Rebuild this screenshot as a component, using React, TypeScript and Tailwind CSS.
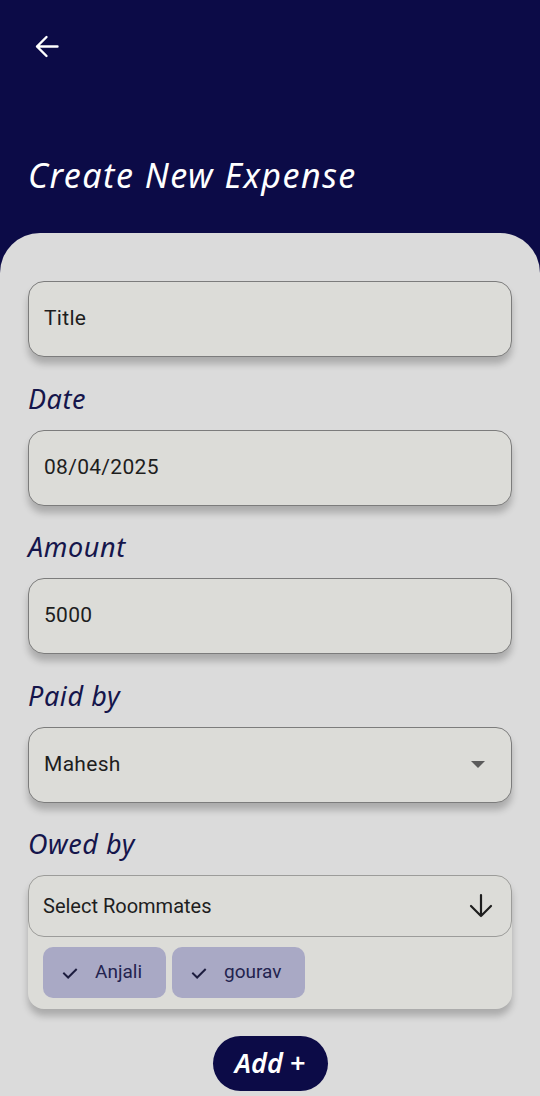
import React from "react";

const heading = { fontFamily: '"Noto Sans", "Open Sans", sans-serif' };
const body = { fontFamily: 'Roboto, "Noto Sans", sans-serif' };

function Label({ children }: { children: React.ReactNode }) {
  return (
    <div
      className="mt-[25.5px] mb-[15px] text-[27px] leading-[32px] italic tracking-[0.6px] text-[#15154b]"
      style={heading}
    >
      {children}
    </div>
  );
}

function Field({ children, right }: { children: React.ReactNode; right?: React.ReactNode }) {
  return (
    <div
      className="h-[76px] rounded-[16px] border border-[#7c7c7c] bg-[#dcdcd8] shadow-[0_7px_7px_rgba(0,0,0,0.22)] pl-[15px] pr-[28px] flex items-center justify-between text-[21px] tracking-[0.3px] text-[#1e1e1e]"
      style={body}
    >
      <span>{children}</span>
      {right}
    </div>
  );
}

function Check() {
  return (
    <svg width="18" height="18" viewBox="0 0 24 24" fill="none">
      <path d="M4 12.5 L9.5 18 L20 7.5" stroke="#1d1d3f" strokeWidth="2.6" strokeLinecap="square" />
    </svg>
  );
}

function Chip({ name }: { name: string }) {
  return (
    <div className="h-[51px] rounded-[10px] bg-[#a9a9c5] flex items-center pl-[18px] pr-[24px] gap-[16px]">
      <Check />
      <span className="text-[19px] text-[#23234f]" style={body}>
        {name}
      </span>
    </div>
  );
}

export default function App() {
  return (
    <div className="w-[540px] h-[1096px] bg-[#0c0b47] flex flex-col overflow-hidden">
      <div className="h-[233px] shrink-0 pt-[35px] px-[28px]">
        <div className="pl-[7px]">
          <svg width="24" height="24" viewBox="0 0 24 24" fill="none">
            <path
              d="M22.5 11.5 H2 M11.5 2 L2 11.5 L11.5 21"
              stroke="#ffffff"
              strokeWidth="2.4"
              strokeLinecap="round"
              strokeLinejoin="round"
            />
          </svg>
        </div>
        <div
          className="mt-[96px] text-[34px] leading-[40px] italic tracking-[1.5px] text-white"
          style={heading}
        >
          Create New Expense
        </div>
      </div>
      <div className="flex-1 bg-[#dbdbdb] rounded-t-[40px] px-[28px] pt-[48px]">
        <Field>Title</Field>
        <Label>Date</Label>
        <Field>08/04/2025</Field>
        <Label>Amount</Label>
        <Field>5000</Field>
        <Label>Paid by</Label>
        <Field
          right={
            <svg width="14" height="8" viewBox="0 0 14 8" className="mr-[-2px]">
              <path d="M0 0 H14 L7 7 Z" fill="#5b5b5b" />
            </svg>
          }
        >
          Mahesh
        </Field>
        <Label>Owed by</Label>
        <div className="rounded-[16px] bg-[#dcdcd8] shadow-[0_7px_7px_rgba(0,0,0,0.22)] pb-[11px]">
          <div
            className="h-[62px] rounded-[16px] border border-[#9c9c9a] flex items-center justify-between pl-[14px] pr-[18px] text-[20px] text-[#1e1e1e]"
            style={body}
          >
            <span>Select Roommates</span>
            <svg width="24" height="26" viewBox="0 0 24 26" fill="none">
              <path
                d="M12 2 V23 M2 13 L12 23 L22 13"
                stroke="#1e1e1e"
                strokeWidth="2.2"
                strokeLinecap="round"
                strokeLinejoin="round"
              />
            </svg>
          </div>
          <div className="flex gap-[6px] pl-[15px] mt-[10px]">
            <Chip name="Anjali" />
            <Chip name="gourav" />
          </div>
        </div>
        <div className="flex justify-center mt-[27px]">
          <div
            className="w-[115px] h-[55px] rounded-full bg-[#0c0b47] flex items-center justify-center text-white italic font-semibold text-[27px]"
            style={heading}
          >
            Add +
          </div>
        </div>
      </div>
    </div>
  );
}
